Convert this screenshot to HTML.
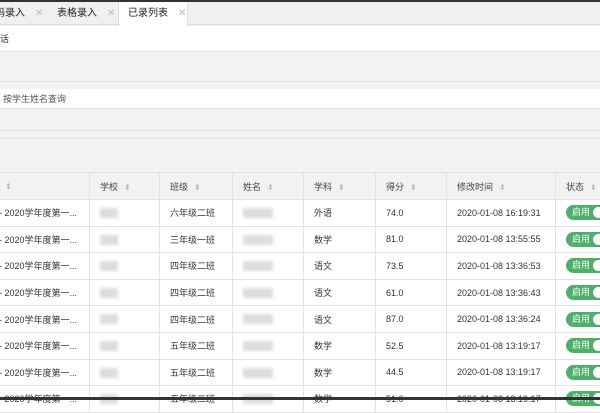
<!DOCTYPE html><html><head><meta charset="utf-8"><style>
*{margin:0;padding:0;box-sizing:border-box}
body{width:600px;height:400px;overflow:hidden;background:#f2f2f2;font-family:"Liberation Sans","Noto Sans CJK SC",sans-serif;font-size:9px;color:#333;position:relative}
.a{position:absolute}
.tab{position:absolute;top:2px;height:23px;line-height:23px;font-size:10px;color:#222}
.x{color:#bbb;margin-left:10px;font-size:10px}
table{position:absolute;left:-12px;top:172px;border-collapse:collapse;background:#fff;table-layout:fixed;width:720px}
td,th{height:26.6px;border:1px solid #e2e2e2;text-align:left;font-weight:normal;padding-left:10px;white-space:nowrap;overflow:hidden}
th{background:#f2f2f2;height:27px;color:#444}
.s{color:#bbb;font-size:8px;margin-left:6px}
.b{display:inline-block;background:#ddd;filter:blur(1.5px);height:10px;vertical-align:middle}
.t{display:inline-block;width:48px;height:15px;border-radius:8px;background:#4caf6a;color:#fff;font-size:9px;line-height:15px;padding-left:6px;position:relative;vertical-align:middle}
.t:after{content:"";position:absolute;left:27px;top:2px;width:11px;height:11px;border-radius:50%;background:#fff}
</style></head><body>
<div class="a" style="left:0;top:0;width:600px;height:2px;background:#333"></div>
<div class="a" style="left:0;top:2px;width:600px;height:23px;background:#f0f0f0;border-bottom:1px solid #ddd"></div>
<div class="a" style="left:118px;top:2px;width:70px;height:24px;background:#fff;border-left:1px solid #ddd;border-right:1px solid #ddd"></div>
<div class="tab" style="left:-5px">码录入<span class="x">✕</span></div>
<div class="tab" style="left:57px">表格录入<span class="x">✕</span></div>
<div class="tab" style="left:128px">已录列表<span class="x">✕</span></div>
<div class="a" style="left:0;top:26px;width:600px;height:26px;background:#fff;border-bottom:1px solid #ddd;line-height:26px;font-size:9px">话</div>
<div class="a" style="left:0;top:81px;width:600px;height:1px;background:#e0e0e0"></div>
<div class="a" style="left:0;top:89px;width:600px;height:20px;background:#fff;border-bottom:1px solid #e0e0e0;line-height:20px;padding-left:3px;color:#555">按学生姓名查询</div>
<div class="a" style="left:0;top:130px;width:600px;height:1px;background:#e0e0e0"></div>
<div class="a" style="left:0;top:138px;width:600px;height:1px;background:#e6e6e6"></div>
<table>
<colgroup><col style="width:101px"><col style="width:70px"><col style="width:73px"><col style="width:71px"><col style="width:72px"><col style="width:71px"><col style="width:109px"><col style="width:153px"></colgroup>
<tr><th><span class="s">⬍</span></th><th>学校<span class="s">⬍</span></th><th>班级<span class="s">⬍</span></th><th>姓名<span class="s">⬍</span></th><th>学科<span class="s">⬍</span></th><th>得分<span class="s">⬍</span></th><th>修改时间<span class="s">⬍</span></th><th>状态<span class="s">⬍</span></th></tr>
<tr><td>- 2020学年度第一...</td><td><span class="b" style="width:18px"></span></td><td>六年级二班</td><td><span class="b" style="width:30px"></span></td><td>外语</td><td>74.0</td><td>2020-01-08 16:19:31</td><td><span class="t">启用</span></td></tr>
<tr><td>- 2020学年度第一...</td><td><span class="b" style="width:18px"></span></td><td>三年级一班</td><td><span class="b" style="width:30px"></span></td><td>数学</td><td>81.0</td><td>2020-01-08 13:55:55</td><td><span class="t">启用</span></td></tr>
<tr><td>- 2020学年度第一...</td><td><span class="b" style="width:18px"></span></td><td>四年级二班</td><td><span class="b" style="width:30px"></span></td><td>语文</td><td>73.5</td><td>2020-01-08 13:36:53</td><td><span class="t">启用</span></td></tr>
<tr><td>- 2020学年度第一...</td><td><span class="b" style="width:18px"></span></td><td>四年级二班</td><td><span class="b" style="width:30px"></span></td><td>语文</td><td>61.0</td><td>2020-01-08 13:36:43</td><td><span class="t">启用</span></td></tr>
<tr><td>- 2020学年度第一...</td><td><span class="b" style="width:18px"></span></td><td>四年级二班</td><td><span class="b" style="width:30px"></span></td><td>语文</td><td>87.0</td><td>2020-01-08 13:36:24</td><td><span class="t">启用</span></td></tr>
<tr><td>- 2020学年度第一...</td><td><span class="b" style="width:18px"></span></td><td>五年级二班</td><td><span class="b" style="width:30px"></span></td><td>数学</td><td>52.5</td><td>2020-01-08 13:19:17</td><td><span class="t">启用</span></td></tr>
<tr><td>- 2020学年度第一...</td><td><span class="b" style="width:18px"></span></td><td>五年级二班</td><td><span class="b" style="width:30px"></span></td><td>数学</td><td>44.5</td><td>2020-01-08 13:19:17</td><td><span class="t">启用</span></td></tr>
<tr><td>- 2020学年度第一...</td><td><span class="b" style="width:18px"></span></td><td>五年级二班</td><td><span class="b" style="width:30px"></span></td><td>数学</td><td>51.0</td><td>2020-01-08 13:19:17</td><td><span class="t">启用</span></td></tr>
</table>
<div class="a" style="left:0;top:397px;width:600px;height:3px;background:#333"></div>
</body></html>
